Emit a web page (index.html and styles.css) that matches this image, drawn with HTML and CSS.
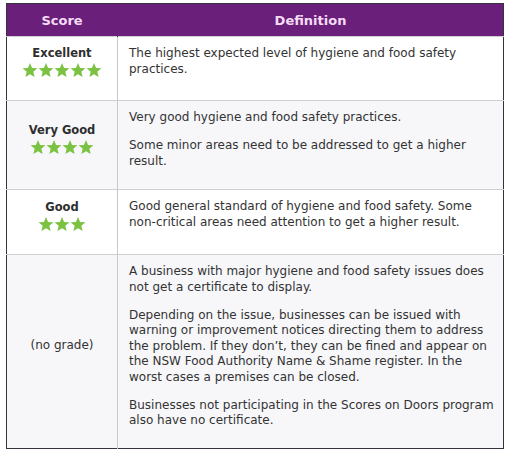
FILE: index.html
```html
<!DOCTYPE html>
<html>
<head>
<meta charset="utf-8">
<link rel="stylesheet" href="styles.css">
</head>
<body>
<svg width="0" height="0" class="defs">
  <defs>
    <symbol id="star" viewBox="0 0 24 24">
      <path d="M12 1.5l3.1 7.4 8 .6-6.1 5.2 1.9 7.8L12 18.3 5.1 22.5 7 14.7 .9 9.5l8-.6z"/>
    </symbol>
  </defs>
</svg>
<table class="scores">
  <thead>
    <tr>
      <th class="col-score">Score</th>
      <th class="col-def">Definition</th>
    </tr>
  </thead>
  <tbody>
    <tr class="row-light row-1">
      <td class="score">
        <div class="label">Excellent</div>
        <div class="stars">
          <svg class="star"><use href="#star"/></svg><svg class="star"><use href="#star"/></svg><svg class="star"><use href="#star"/></svg><svg class="star"><use href="#star"/></svg><svg class="star"><use href="#star"/></svg>
        </div>
      </td>
      <td class="def">
        <p>The highest expected level of hygiene and food safety practices.</p>
      </td>
    </tr>
    <tr class="row-grey row-2">
      <td class="score">
        <div class="label">Very Good</div>
        <div class="stars">
          <svg class="star"><use href="#star"/></svg><svg class="star"><use href="#star"/></svg><svg class="star"><use href="#star"/></svg><svg class="star"><use href="#star"/></svg>
        </div>
      </td>
      <td class="def">
        <p>Very good hygiene and food safety practices.</p>
        <p>Some minor areas need to be addressed to get a higher result.</p>
      </td>
    </tr>
    <tr class="row-light row-3">
      <td class="score">
        <div class="label">Good</div>
        <div class="stars">
          <svg class="star"><use href="#star"/></svg><svg class="star"><use href="#star"/></svg><svg class="star"><use href="#star"/></svg>
        </div>
      </td>
      <td class="def">
        <p>Good general standard of hygiene and food safety. Some non-critical areas need attention to get a higher result.</p>
      </td>
    </tr>
    <tr class="row-grey row-4">
      <td class="score"><span class="nograde">(no grade)</span></td>
      <td class="def">
        <p>A business with major hygiene and food safety issues does not get a certificate to display.</p>
        <p>Depending on the issue, businesses can be issued with warning or improvement notices directing them to address the problem. If they don’t, they can be fined and appear on the NSW Food Authority Name &amp; Shame register. In the worst cases a premises can be closed.</p>
        <p>Businesses not participating in the Scores on Doors program also have no certificate.</p>
      </td>
    </tr>
  </tbody>
</table>
</body>
</html>
```

FILE: styles.css
```css
html, body {
  margin: 0;
  padding: 0;
  background: #ffffff;
}

body {
  padding: 3px 0 0 6px;
  font-family: "DejaVu Sans", Verdana, sans-serif;
  font-size: 12px;
  color: #333333;
}

.defs {
  position: absolute;
  width: 0;
  height: 0;
}

.scores {
  width: 498px;
  border-collapse: collapse;
  border: 1px solid #3a3140;
  table-layout: fixed;
}

.scores th {
  background: #6a1f7a;
  color: #f5dcf6;
  font-weight: bold;
  font-size: 13px;
  height: 32px;
  padding: 0;
  text-align: center;
  vertical-align: middle;
}

.col-score {
  width: 110px;
  border-right: 1px solid #6a1f7a;
}

.scores td {
  box-sizing: border-box;
  border-top: 1px solid #cfcfd3;
  padding: 0;
}

.row-1 td { height: 64px; }
.row-2 td { height: 89px; }
.row-3 td { height: 65px; }
.row-4 td { height: 194px; }

.row-light td {
  background: #ffffff;
}

.row-grey td {
  background: #f7f7fa;
}

.scores td.score {
  border-right: 1px solid #c9c9cd;
  text-align: center;
  vertical-align: middle;
  padding-bottom: 14px;
}

.label {
  font-weight: bold;
  font-size: 11.5px;
  color: #2e2e2e;
  line-height: 14px;
}

.stars {
  display: flex;
  justify-content: center;
  margin-top: 2px;
  height: 15px;
}

.star {
  width: 16px;
  height: 16px;
  fill: #7cc242;
}

.nograde {
  font-size: 12px;
}

.scores td.def {
  vertical-align: top;
  padding: 9px 7px 0 11px;
}

.def p {
  margin: 0 0 12.5px 0;
  line-height: 15.5px;
}
```
